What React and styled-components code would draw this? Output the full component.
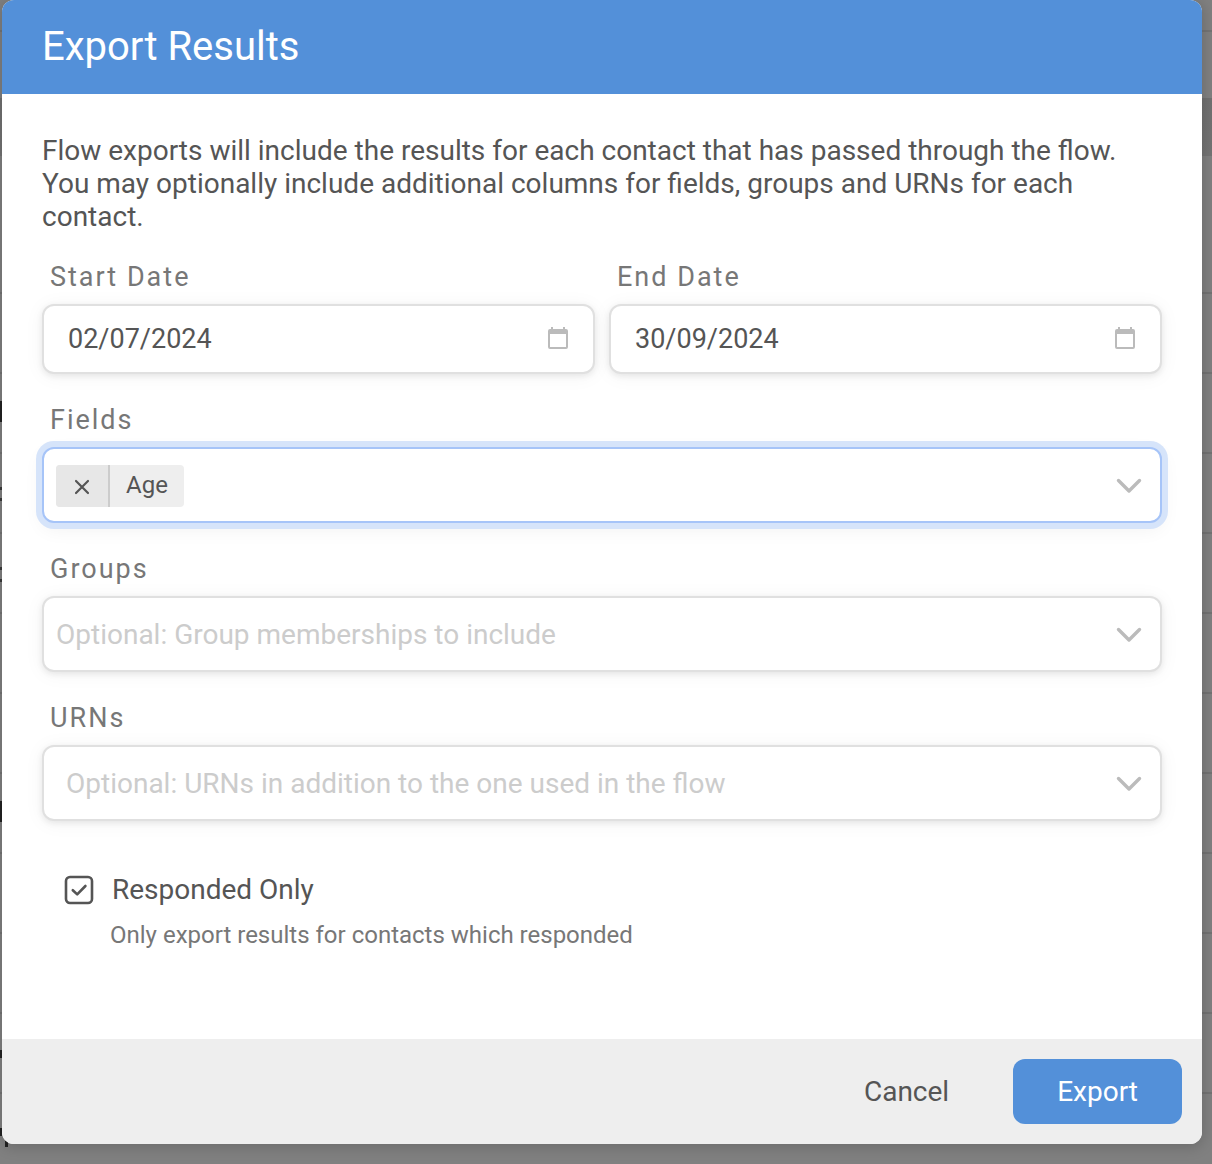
import React, { useState } from "react";
import styled, { createGlobalStyle, css } from "styled-components";

const GlobalStyle = createGlobalStyle`
  *, *::before, *::after { box-sizing: border-box; }
  body { margin: 0; background: #7e7e7e; }
  body, button, input { font-family: Roboto, "Liberation Sans", sans-serif; }
`;

/* The dimmed list behind the dialog: row rules, and the row text that shows at its left edge. */
const Page = styled.div`
  min-height: 100vh;
  padding: 0 10px 20px 2px;
  background:
    linear-gradient(#222, #222) 0 401px / 2px 21px no-repeat,
    linear-gradient(#3a3a3a, #3a3a3a) 0 487px / 2px 3px no-repeat,
    linear-gradient(#3a3a3a, #3a3a3a) 0 498px / 2px 3px no-repeat,
    linear-gradient(#3a3a3a, #3a3a3a) 0 567px / 2px 3px no-repeat,
    linear-gradient(#3a3a3a, #3a3a3a) 0 579px / 2px 3px no-repeat,
    linear-gradient(#222, #222) 0 801px / 2px 21px no-repeat,
    linear-gradient(#222, #222) 0 1050px / 2px 8px no-repeat,
    linear-gradient(#222, #222) 0 1128px / 2px 8px no-repeat,
    linear-gradient(#222, #222) 5px 1140px / 3px 7px no-repeat,
    linear-gradient(#747474, #747474) 0 30px / 100% 2px no-repeat,
    linear-gradient(#717171, #747474) 0 98px / 100% 58px no-repeat,
    repeating-linear-gradient(transparent 0 78px, #737373 78px 80px) 0 214px / 100% 900px no-repeat,
    #808080;
`;

const Dialog = styled.form`
  display: flex;
  flex-direction: column;
  min-height: calc(100vh - 20px);
  border-radius: 12px;
  overflow: hidden;
  background: #fff;
  box-shadow: 0 2px 14px 2px rgba(0, 0, 0, 0.16);
`;

const Header = styled.header`
  padding: 20px 40px;
  background: #5390d9;
`;

const Title = styled.h1`
  margin: 0;
  color: #fff;
  font-size: 40px;
  font-weight: 400;
  line-height: 54px;
`;

const Body = styled.div`
  flex: 1;
  padding: 40px;
`;

const Intro = styled.p`
  margin: 0 0 28px;
  color: #555;
  font-size: 28px;
  line-height: 33px;
`;

const DateRow = styled.div`
  display: grid;
  grid-template-columns: 1fr 1fr;
  gap: 14px;
`;

const Field = styled.div`
  display: flex;
  flex-direction: column;
  gap: 10px;
  margin-bottom: 30px;
`;

const Label = styled.label`
  padding-left: 8px;
  color: #777;
  font-size: 27px;
  letter-spacing: 2px;
  line-height: 33px;
`;

const Control = styled.div`
  display: flex;
  align-items: center;
  height: ${(p) => (p.$compact ? 70 : 76)}px;
  padding: 0 18px 0 ${(p) => p.$inset}px;
  border: 2px solid #e0e0e0;
  border-radius: 12px;
  background: #fff;
  box-shadow: 0 2px 6px rgba(0, 0, 0, 0.08), 0 2px 20px rgba(0, 0, 0, 0.05);
  ${(p) =>
    p.$focused &&
    css`
      border-color: #a6c4f8;
      box-shadow: 0 0 0 6px #d6e4fa, 0 6px 20px rgba(0, 0, 0, 0.06);
    `}
`;

const TextInput = styled.input`
  flex: 1;
  min-width: 0;
  padding: 0;
  border: 0;
  outline: 0;
  background: transparent;
  color: #555;
  font-size: ${(p) => (p.$date ? 27 : 28)}px;
  line-height: 33px;
  &::placeholder { color: #ccc; opacity: 1; }
`;

const IconButton = styled.button`
  display: flex;
  padding: 2px 0 0;
  border: 0;
  background: transparent;
  color: #bbb;
  cursor: pointer;
`;

const DateButton = styled(IconButton)`
  padding: 0 7px 2px;
`;

const Chip = styled.span`
  display: flex;
  align-items: stretch;
  height: 42px;
  margin-top: 2px;
  border-radius: 4px;
  overflow: hidden;
  background: #eee;
  color: #555;
  font-size: 24px;
  line-height: 40px;
`;

const ChipRemove = styled.button`
  display: flex;
  align-items: center;
  justify-content: center;
  width: 54px;
  padding: 2px 0 0;
  border: 0;
  border-right: 2px solid #ccc;
  background: #e7e7e7;
  color: #555;
  cursor: pointer;
`;

const ChipText = styled.span`
  padding: 0 16px;
`;

const CheckRow = styled.label`
  display: flex;
  align-items: center;
  gap: 18px;
  margin-top: 52px;
  padding-left: 22px;
  color: #555;
  font-size: 28px;
  line-height: 33px;
`;

const CheckBox = styled.span`
  display: grid;
  & > * { grid-area: 1 / 1; }
  & > svg { pointer-events: none; }
  & > input:not(:checked) + svg path { display: none; }
`;

const CheckInput = styled.input`
  appearance: none;
  width: 30px;
  height: 30px;
  margin: 0;
`;

const Help = styled.p`
  margin: 15px 0 0 68px;
  color: #777;
  font-size: 24px;
  line-height: 28px;
`;

const Footer = styled.footer`
  display: flex;
  justify-content: flex-end;
  gap: 20px;
  padding: 20px;
  background: #eee;
`;

const Button = styled.button`
  height: 65px;
  padding: 0 44px;
  border: 0;
  border-radius: 12px;
  background: ${(p) => (p.$primary ? "#5390d9" : "transparent")};
  color: ${(p) => (p.$primary ? "#fff" : "#555")};
  font-size: 28px;
  cursor: pointer;
`;

const CalendarIcon = () => (
  <svg width="20" height="22" viewBox="0 0 20 22" fill="currentColor" aria-hidden="true">
    <path fillRule="evenodd" d="M3 0h2v2h10V0h2v2h1a2 2 0 0 1 2 2v16a2 2 0 0 1-2 2H2a2 2 0 0 1-2-2V4a2 2 0 0 1 2-2h1zM2 7v13h16V7z" />
  </svg>
);

const ChevronIcon = () => (
  <svg width="26" height="16" viewBox="0 0 26 16" fill="none" stroke="currentColor" strokeWidth="3.4" strokeLinecap="round" strokeLinejoin="round" aria-hidden="true">
    <path d="M2.5 2.5 13 13 23.5 2.5" />
  </svg>
);

const CloseIcon = () => (
  <svg width="16" height="16" viewBox="0 0 16 16" fill="none" stroke="currentColor" strokeWidth="2.2" strokeLinecap="round" aria-hidden="true">
    <path d="M2 2l12 12M14 2 2 14" />
  </svg>
);

const TickIcon = () => (
  <svg width="30" height="30" viewBox="0 0 30 30" fill="none" stroke="#555" strokeWidth="2.6" strokeLinecap="round" strokeLinejoin="round" aria-hidden="true">
    <rect x="2" y="2" width="26" height="26" rx="4" />
    <path d="m8.8 15.2 4.4 4.2 8.2-8.4" />
  </svg>
);

function DateField({ id, label, initial }) {
  return (
    <Field>
      <Label htmlFor={id}>{label}</Label>
      <Control $compact $inset={24}>
        <TextInput id={id} $date type="text" inputMode="numeric" defaultValue={initial} />
        <DateButton type="button" aria-label={`Choose ${label}`}>
          <CalendarIcon />
        </DateButton>
      </Control>
    </Field>
  );
}

function SelectField({ id, label, placeholder, inset = 12, focused, children }) {
  return (
    <Field>
      <Label htmlFor={id}>{label}</Label>
      <Control $inset={inset} $focused={focused}>
        {children}
        <TextInput id={id} type="text" role="combobox" aria-expanded="false" placeholder={placeholder} />
        <IconButton type="button" aria-label={`Open ${label}`}>
          <ChevronIcon />
        </IconButton>
      </Control>
    </Field>
  );
}

export default function App() {
  const [fields, setFields] = useState(["Age"]);
  const remove = (name) => setFields(fields.filter((f) => f !== name));

  return (
    <Page>
      <GlobalStyle />
      <Dialog role="dialog" aria-labelledby="title" onSubmit={(e) => e.preventDefault()}>
        <Header>
          <Title id="title">Export Results</Title>
        </Header>
        <Body>
          <Intro>
            Flow exports will include the results for each contact that has passed through the flow.
            You may optionally include additional columns for fields, groups and URNs for each contact.
          </Intro>
          <DateRow>
            <DateField id="start" label="Start Date" initial="02/07/2024" />
            <DateField id="end" label="End Date" initial="30/09/2024" />
          </DateRow>
          <SelectField id="fields" label="Fields" focused>
            {fields.map((name) => (
              <Chip key={name}>
                <ChipRemove type="button" aria-label={`Remove ${name}`} onClick={() => remove(name)}>
                  <CloseIcon />
                </ChipRemove>
                <ChipText>{name}</ChipText>
              </Chip>
            ))}
          </SelectField>
          <SelectField id="groups" label="Groups" placeholder="Optional: Group memberships to include" />
          <SelectField
            id="urns"
            label="URNs"
            inset={22}
            placeholder="Optional: URNs in addition to the one used in the flow"
          />
          <CheckRow>
            <CheckBox>
              <CheckInput type="checkbox" defaultChecked aria-describedby="responded-help" />
              <TickIcon />
            </CheckBox>
            Responded Only
          </CheckRow>
          <Help id="responded-help">Only export results for contacts which responded</Help>
        </Body>
        <Footer>
          <Button type="button">Cancel</Button>
          <Button type="submit" $primary>Export</Button>
        </Footer>
      </Dialog>
    </Page>
  );
}
